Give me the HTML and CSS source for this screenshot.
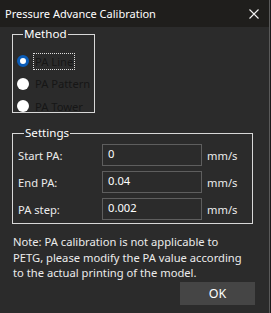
FILE: index.html
```html
<!DOCTYPE html>
<html lang="en">
<head>
    <meta charset="UTF-8">
    <title>Pressure Advance Calibration</title>
    <link rel="stylesheet" href="styles.css">
</head>
<body>
    <div class="window">
        <div class="titlebar">
            <span class="title">Pressure Advance Calibration</span>
            <svg class="close" width="10" height="10" viewBox="0 0 10 10">
                <path d="M0.5 0.5 L9.5 9.5 M9.5 0.5 L0.5 9.5" stroke="#f2f2f2" stroke-width="1.1" fill="none"/>
            </svg>
        </div>
        <div class="content">
            <fieldset class="group method">
                <legend>Method</legend>
                <div class="radio-row">
                    <span class="radio checked"></span>
                    <span class="radio-label focused">PA Line</span>
                </div>
                <div class="radio-row">
                    <span class="radio"></span>
                    <span class="radio-label">PA Pattern</span>
                </div>
                <div class="radio-row">
                    <span class="radio"></span>
                    <span class="radio-label">PA Tower</span>
                </div>
            </fieldset>

            <fieldset class="group settings">
                <legend>Settings</legend>
                <div class="field-row">
                    <span class="field-label">Start PA:</span>
                    <div class="field-input">0</div>
                    <span class="unit">mm/s</span>
                </div>
                <div class="field-row">
                    <span class="field-label">End PA:</span>
                    <div class="field-input">0.04</div>
                    <span class="unit">mm/s</span>
                </div>
                <div class="field-row">
                    <span class="field-label">PA step:</span>
                    <div class="field-input">0.002</div>
                    <span class="unit">mm/s</span>
                </div>
            </fieldset>

            <p class="note">Note: PA calibration is not applicable to PETG, please modify the PA value according to the actual printing of the model.</p>

            <div class="actions">
                <button type="button" class="ok-button">OK</button>
            </div>
        </div>
    </div>
</body>
</html>
```

FILE: styles.css
```css
body {
    margin: 0;
    padding: 0;
    background-color: #1b1b1b;
    font-family: "Noto Sans", "Open Sans", sans-serif;
    font-size: 11.2px;
    color: #ececec;
}
.window {
    width: 269px;
    height: 313px;
    background-color: #2b2b2b;
    border-right: 1px solid #5a5a5a;
    overflow: hidden;
}
.titlebar {
    height: 27px;
    background-color: #1f1e1c;
    display: flex;
    align-items: center;
    justify-content: space-between;
    padding: 0 10px 0 5px;
}
.title {
    color: #ffffff;
    font-size: 11px;
}
.close {
    display: block;
}
.content {
    padding: 0 0 0 12px;
}
.group {
    margin: 0;
    border: 1px solid #d8d8d8;
    padding: 0;
}
.group legend {
    color: #ffffff;
    font-size: 11.6px;
    line-height: 16px;
    padding: 0 1px;
    margin-left: 6px;
}
.method {
    width: 77px;
    height: 77px;
    margin-top: -1px;
    padding: 8px 0 0 4px;
    box-sizing: content-box;
}
.radio-row {
    display: flex;
    align-items: center;
    height: 22.5px;
    white-space: nowrap;
}
.radio {
    flex: none;
    width: 12px;
    height: 12px;
    border-radius: 50%;
    background-color: #ffffff;
    margin-right: 4px;
    box-sizing: border-box;
}
.radio.checked {
    border: 3.5px solid #0a5cb8;
}
.radio-label {
    color: #161616;
    padding: 0 1px;
    line-height: 15px;
    border: 1px dotted transparent;
}
.radio-label.focused {
    border-color: #e0e0e0;
}
.settings {
    width: 234px;
    margin-top: 12px;
    padding: 3px 0 3px 5px;
}
.field-row {
    display: flex;
    align-items: center;
    height: 22px;
    margin-bottom: 5px;
}
.field-row:last-child {
    margin-bottom: 0;
}
.field-label {
    width: 84px;
}
.field-input {
    border: 1px solid #5e5e5e;
    padding-left: 5px;
    box-sizing: border-box;
    width: 100px;
    height: 22px;
    line-height: 17px;
    color: #ffffff;
}
.unit {
    margin-left: 5px;
}
.note {
    margin: 10px 0 0 1px;
    width: 236px;
    line-height: 15.5px;
}
.actions {
    display: flex;
    justify-content: flex-end;
    padding-right: 14px;
    margin-top: 1px;
}
.ok-button {
    width: 75px;
    height: 23px;
    background-color: #454545;
    border: none;
    color: #ffffff;
    font-family: inherit;
    font-size: 12.5px;
    padding: 0;
}
```
